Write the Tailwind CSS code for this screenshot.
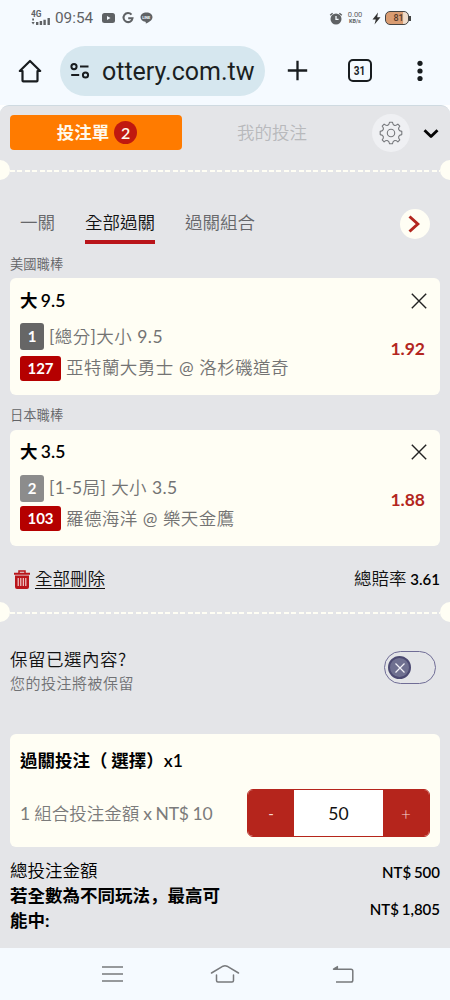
<!DOCTYPE html>
<html lang="zh-Hant">
<head>
<meta charset="utf-8">
<meta name="viewport" content="width=device-width, initial-scale=1">
<title>投注單</title>
<script src="https://cdn.jsdelivr.net/npm/@tailwindcss/browser@4"></script>
</head>
<body class="w-[450px] h-[1000px] overflow-hidden bg-[#f5faff] font-[Lato,'Noto_Sans_CJK_TC',sans-serif] text-[17.5px] leading-[26px] text-[#111] whitespace-nowrap">

<!-- status bar -->
<div class="flex h-[36px] items-center pl-[31px] font-[Roboto,sans-serif] text-[#5f6265]">
  <svg class="w-[21px] h-[16px] shrink-0" viewBox="0 0 21 16" fill="#5f6265">
    <text x="0" y="7" font-size="8.500" font-weight="700" font-family="Roboto" textLength="10.500" lengthAdjust="spacingAndGlyphs">4G</text>
    <path d="M1.200 8.500h1.800v2h-1.800zM0.500 12h3.200l-1.600 2.500zM5 12h2.400v3H5zM8.700 11h2.400v4H8.700zM12.400 9.800h2.400V15h-2.400zM16.500 8h2.400v7h-2.400z"/>
  </svg>
  <span class="ml-[3px] w-[39px] text-[15.300px] leading-[20px]">09:54</span>
  <svg class="ml-[8px] w-[13px] h-[10px]" viewBox="0 0 13 10"><rect width="13" height="10" rx="2.500" fill="#5f6265"/><path d="M5 3l3.500 2L5 7z" fill="#f5faff"/></svg>
  <svg class="ml-[7px] w-[12px] h-[12px]" viewBox="0 0 12 12" fill="none" stroke="#5f6265" stroke-width="2"><path d="M9.500 2.700A4.500 4.500 0 1 0 10.500 6.300H6.200"/></svg>
  <svg class="ml-[6px] w-[13px] h-[12px]" viewBox="0 0 13 12" fill="#5f6265"><path d="M6.500.5C3 .5.5 2.500.5 5.200c0 2.300 2 4 4.800 4.600.8.2.4 1 .5 1.700C8 10.800 12.500 8.200 12.500 5.200 12.500 2.500 10 .5 6.500.5z"/><text x="2.200" y="6.800" font-size="3.800" font-weight="700" font-family="Roboto" fill="#f5faff">LINE</text></svg>
  <svg class="ml-[176px] w-[14px] h-[13px]" viewBox="0 0 14 13"><circle cx="7" cy="7" r="5.500" fill="#5f6265"/><path d="M1.200 3.300L3.600 1.200M12.800 3.300L10.400 1.200" stroke="#5f6265" stroke-width="1.500"/><path d="M7 4v3.400h2.600" fill="none" stroke="#f5faff" stroke-width="1.300"/></svg>
  <div class="ml-[4px] w-[16px] text-center text-[7.500px] leading-[6.500px]"><div>0.00</div><div class="text-[5.500px] font-bold">KB/s</div></div>
  <svg class="ml-[9px] w-[9px] h-[13px]" viewBox="0 0 9 13"><path d="M6 .5L.5 7.500H3.800L2.500 12.500 8.500 5.300H5.200z" fill="#333"/></svg>
  <div class="ml-[4px] flex h-[14px] w-[24px] items-center justify-center rounded-[5px] border-[1.500px] border-[#444] bg-linear-to-r from-[#d99c72] from-75% to-[#f0dccb] to-80% text-[9px] font-medium leading-none text-[#54392a]"><span class="pl-[3px]">81</span></div>
  <div class="h-[5px] w-[1.500px] bg-[#444]"></div>
</div>

<!-- browser toolbar -->
<div class="flex h-[69px] items-center pl-[18px] text-[#1b1f22]">
  <svg class="w-[24px] h-[24px]" viewBox="0 0 24 24" fill="none" stroke="#181c1f" stroke-width="2.200" stroke-linejoin="round" stroke-linecap="round"><path d="M4.500 12v9.500q0 .8.800.8h13.400q.8 0 .8-.8V12H22.200L12 2 1.800 12z"/></svg>
  <div class="ml-[18px] flex h-[50px] w-[205px] items-center rounded-full bg-[#d6e7ef] pl-[10px]">
    <svg class="w-[20px] h-[16px]" viewBox="0 0 20 16" fill="none" stroke="#181c1f" stroke-width="2"><circle cx="4" cy="3.600" r="2.600"/><path d="M10 3.600h8.500M1.200 12h8"/><circle cx="15.500" cy="12" r="2.600"/></svg>
    <span class="ml-[12px] mt-[2px] font-[Roboto,sans-serif] text-[25px] leading-[30px]">ottery.com.tw</span>
  </div>
  <svg class="ml-[22px] w-[21px] h-[21px]" viewBox="0 0 21 21" stroke="#181c1f" stroke-width="2.300"><path d="M.8 10.500h19.400M10.500.8v19.400"/></svg>
  <div class="ml-[40px] flex h-[22.500px] w-[23.500px] items-center justify-center rounded-[5px] border-2 border-[#181c1f]"><svg class="w-[13px] h-[12px]" viewBox="0 0 13 12" fill="#181c1f"><text x=".7" y="10" font-size="12" font-weight="700" font-family="Roboto" textLength="11.500" lengthAdjust="spacingAndGlyphs">31</text></svg></div>
  <svg class="ml-[44.500px] w-[8px] h-[22px]" viewBox="0 0 8 22" fill="#181c1f"><circle cx="4" cy="3.300" r="2.600"/><circle cx="4" cy="11" r="2.600"/><circle cx="4" cy="18.500" r="2.600"/></svg>
</div>

<main class="h-[843px] overflow-hidden bg-white">
<div class="h-full rounded-t-[9px] border-t border-[#cfdae1] bg-[#e4e5e8]">
  <!-- slip header -->
  <div class="flex h-[54px] items-center pl-[10px]">
    <div class="-mt-px flex h-[35px] w-[172px] items-center justify-center rounded-[4px] bg-[#ff7b00] pl-[2px] font-bold text-[#fff9ec]">投注單<span class="ml-[5px] flex size-[23px] items-center justify-center rounded-full bg-[#c0190f] text-[16px] font-semibold leading-none">2</span></div>
    <div class="ml-[55px] w-[70px] font-[350] text-[#b8b9bc]">我的投注</div>
    <div class="ml-[65px] flex size-[38px] items-center justify-center rounded-full bg-[#eff0f3]">
      <svg class="size-[24px]" viewBox="0 0 24 24" fill="none" stroke="#77797d" stroke-width="1.100" stroke-linejoin="round"><circle cx="12" cy="12" r="3.700"/><path d="M10.600 1.200h2.800q.5 2.800 2.100 3.200 1.600.5 3.400-1.200l1.900 1.900q-1.700 1.900-1.100 3.400.6 1.500 3.100 1.900v3.200q-2.500.4-3.100 1.900-.6 1.500 1.100 3.400l-1.900 1.900q-1.800-1.700-3.400-1.200-1.600.4-2.100 3.200h-2.800q-.5-2.800-2.100-3.200-1.600-.5-3.400 1.200l-1.900-1.900q1.700-1.900 1.100-3.400-.6-1.500-3.100-1.900v-3.200q2.500-.4 3.100-1.900.6-1.500-1.100-3.400l1.900-1.900q1.800 1.700 3.400 1.200 1.600-.4 2.100-3.200z"/></svg>
    </div>
    <svg class="ml-[13px] mt-[2px] w-[16px] h-[10px]" viewBox="0 0 16 10" fill="none" stroke="#050505" stroke-width="2.800" stroke-linejoin="round"><path d="M1.500 1.200L8 7.600l6.500-6.400"/></svg>
  </div>
  <!-- perforation -->
  <div class="-mx-[10px] flex h-[20px] items-center justify-between">
    <span class="size-[20px] rounded-full bg-[#fffef4]"></span><span class="mt-[2px] h-[2.500px] flex-1 bg-[repeating-linear-gradient(90deg,#fffef4_0_5px,transparent_5px_7.400px)]"></span><span class="size-[20px] rounded-full bg-[#fffef4]"></span>
  </div>
  <!-- tabs -->
  <div class="flex h-[72px] items-start pl-[20px] pt-[30px] font-[350] text-[#66676a]">
    <span class="w-[35px]">一關</span>
    <span class="ml-[30px] h-[34px] w-[70px] border-b-[4px] border-[#b9141a] text-[#111]">全部過關</span>
    <span class="ml-[30px] w-[70px]">過關組合</span>
    <span class="-mt-px ml-[145px] flex size-[30px] items-center justify-center rounded-full bg-[#fffef4]"><svg class="-ml-[2px] w-[12px] h-[18px]" viewBox="0 0 12 18" fill="none" stroke="#b3261e" stroke-width="3"><path d="M1.500 1.500L9.800 9l-8.300 7.500"/></svg></span>
  </div>
  <div class="h-[26px] pl-[10px] text-[13.300px] leading-[24px] font-[350] text-[#626366]">美國職棒</div>
  <!-- selection 1 -->
  <div class="mx-[10px] flex h-[117px] justify-between rounded-[6px] bg-[#fffef4] pl-[10px] pt-[10px] text-[#737373]">
    <div>
      <div class="font-semibold [word-spacing:-1px] text-black">大 9.5</div>
      <div class="mt-[9px] flex h-[27px] items-center"><span class="mr-[5px] w-[24px] rounded-[3px] bg-[#666] text-center text-[15px] font-bold leading-[27px] text-white">1</span><span class="font-[350] tracking-[0.400px]"><span class="font-normal">[</span>總分<span class="font-normal">]</span>大小 <span class="font-normal">9.5</span></span></div>
      <div class="mt-[5px] flex h-[26px] items-center"><span class="mr-[5px] w-[41px] rounded-[3px] bg-[#b50000] text-center text-[15px] font-bold leading-[25px] text-white">127</span><span class="font-[350] tracking-[0.450px]">亞特蘭大勇士 <span class="font-normal">@</span> 洛杉磯道奇</span></div>
    </div>
    <div class="flex flex-col items-end pr-[13px] pt-[5px]"><svg class="size-[16px]" viewBox="0 0 16 16" stroke="#222" stroke-width="1.400"><path d="M.8.8l14.400 14.400M15.200.8L.8 15.200"/></svg><span class="mt-[27px] pr-[2px] text-[17.500px] font-bold text-[#b3261e]">1.92</span></div>
  </div>
  <div class="h-[34.500px] pl-[10px] pt-[9px] text-[13.300px] leading-[23px] font-[350] text-[#626366]">日本職棒</div>
  <!-- selection 2 -->
  <div class="mx-[10px] flex h-[116.500px] justify-between rounded-[6px] bg-[#fffef4] pl-[10px] pt-[9px] text-[#737373]">
    <div>
      <div class="font-semibold [word-spacing:-1px] text-black">大 3.5</div>
      <div class="mt-[10px] flex h-[27px] items-center"><span class="mr-[5px] w-[24px] rounded-[3px] bg-[#8c8c8c] text-center text-[15px] font-bold leading-[27px] text-white">2</span><span class="font-[350] tracking-[0.350px]"><span class="font-normal">[1-5</span>局<span class="font-normal">]</span> 大小 <span class="font-normal">3.5</span></span></div>
      <div class="mt-[4px] flex h-[26px] items-center"><span class="mr-[5px] w-[41px] rounded-[3px] bg-[#b50000] text-center text-[15px] font-bold leading-[25px] text-white">103</span><span class="font-[350] tracking-[0.400px]">羅德海洋 <span class="font-normal">@</span> 樂天金鷹</span></div>
    </div>
    <div class="flex flex-col items-end pr-[13px] pt-[5px]"><svg class="size-[16px]" viewBox="0 0 16 16" stroke="#222" stroke-width="1.400"><path d="M.8.8l14.400 14.400M15.200.8L.8 15.200"/></svg><span class="mt-[27px] pr-[2px] text-[17.500px] font-bold text-[#b3261e]">1.88</span></div>
  </div>
  <!-- slip totals -->
  <div class="flex h-[56px] items-center px-[10px] pt-[10px]">
    <svg class="ml-[4px] w-[16px] h-[19px]" viewBox="0 0 16 19"><path d="M5 3V1h6v2" fill="none" stroke="#b9141a" stroke-width="1.500"/><path d="M0 2.800h16v2H0zM1 5.500h14V17a2 2 0 0 1-2 2H3a2 2 0 0 1-2-2z" fill="#b9141a"/><path d="M4.200 8v8M6.800 8v8M9.300 8v8M11.800 8v8" stroke="#f6dcdc" stroke-width="1.100"/></svg>
    <span class="ml-[5px] w-[70px] font-[350] underline decoration-1 underline-offset-[3px]">全部刪除</span>
    <span class="ml-auto font-[350] [word-spacing:-0.800px]">總賠率 <span class="text-[15px] font-semibold text-black">3.61</span></span>
  </div>
  <div class="-mx-[10px] flex h-[20px] items-center justify-between">
    <span class="size-[20px] rounded-full bg-[#fffef4]"></span><span class="mt-[2px] h-[2.500px] flex-1 bg-[repeating-linear-gradient(90deg,#fffef4_0_5px,transparent_5px_7.400px)]"></span><span class="size-[20px] rounded-full bg-[#fffef4]"></span>
  </div>
  <!-- keep selections -->
  <div class="flex h-[112px] items-start justify-between pl-[10px] pr-[14px] pt-[25px]">
    <div><div class="h-[25px] font-[350] tracking-[0.500px]">保留已選內容<span class="font-['Noto_Sans_CJK_TC'] leading-none">?</span></div><div class="text-[15px] leading-[22px] tracking-[0.500px] font-[350] text-[#707174]">您的投注將被保留</div></div>
    <div class="mt-[4px] flex h-[33px] w-[52px] items-center rounded-full border border-[#706d96] pl-[3px]"><span class="flex size-[23px] items-center justify-center rounded-full border-2 border-[#4c4a72] bg-[#6f7090]"><svg class="size-[10px]" viewBox="0 0 10 10" stroke="#f3f3f8" stroke-width="1.200"><path d="M.5.5l9 9M9.500.5l-9 9"/></svg></span></div>
  </div>
  <!-- stake -->
  <div class="mx-[10px] h-[113px] rounded-[6px] bg-[#fffef4] px-[10px] pt-[14px]">
    <div class="font-semibold [word-spacing:-0.500px] text-black">過關投注（ 選擇）x1</div>
    <div class="mt-[15px] flex items-center justify-between">
      <span class="pt-px font-[350] text-[#7b7b7b] [word-spacing:-0.700px]"><span class="font-normal">1</span> 組合投注金額 <span class="font-normal tracking-[-0.150px]">x NT$ 10</span></span>
      <div class="flex h-[48px] w-[183px] items-stretch overflow-hidden rounded-[6px] border border-[#b5251c] bg-white text-center leading-[47px]">
        <span class="w-[46px] bg-[#b5251c] text-[15px] text-[#f6d9d0]">-</span><span class="flex-1 text-[17.500px]">50</span><span class="w-[46px] bg-[#b5251c] text-[17px] font-light text-[#f6d9d0]">+</span>
      </div>
    </div>
  </div>
  <!-- summary -->
  <div class="px-[10px] pt-[11px] text-black">
    <div class="flex h-[25px] justify-between"><span class="font-[350]">總投注金額</span><span class="pt-px text-[15px] font-semibold [word-spacing:-1px]">NT$ 500</span></div>
    <div class="flex items-center justify-between"><b class="leading-[25px]">若全數為不同玩法<span lang="zh-Hans" class="font-['Noto_Sans_CJK_SC'] leading-none">，</span>最高可<br>能中:</b><span class="pt-px text-[15px] font-semibold [word-spacing:-1px]">NT$ 1,805</span></div>
  </div>
</div>
</main>

<!-- system navigation -->
<nav class="flex h-[52px] items-center pl-[102px]">
  <svg class="w-[21px] h-[18px]" viewBox="0 0 21 18" stroke="#77797c" stroke-width="1.500"><path d="M0 2h21M0 9h21M0 16h21"/></svg>
  <svg class="ml-[87px] w-[30px] h-[20px]" viewBox="0 0 30 20" fill="none" stroke="#77797c" stroke-width="1.500" stroke-linejoin="round" stroke-linecap="round"><path d="M1.500 9L13 2.200q2-.9 4 0L28.500 9M6.500 11v5.500q0 1.500 1.500 1.500h14q1.500 0 1.500-1.500V11"/></svg>
  <svg class="ml-[92px] w-[22px] h-[19px]" viewBox="0 0 22 19" fill="none" stroke="#77797c" stroke-width="1.500" stroke-linejoin="round"><path d="M6 1.500L1.500 4.200H19q1.800 0 1.800 1.800v9.200q0 1.800-1.800 1.800H4"/><path d="M6 1.500v2.500H2z" fill="#77797c" stroke="none"/></svg>
</nav>
</body>
</html>
